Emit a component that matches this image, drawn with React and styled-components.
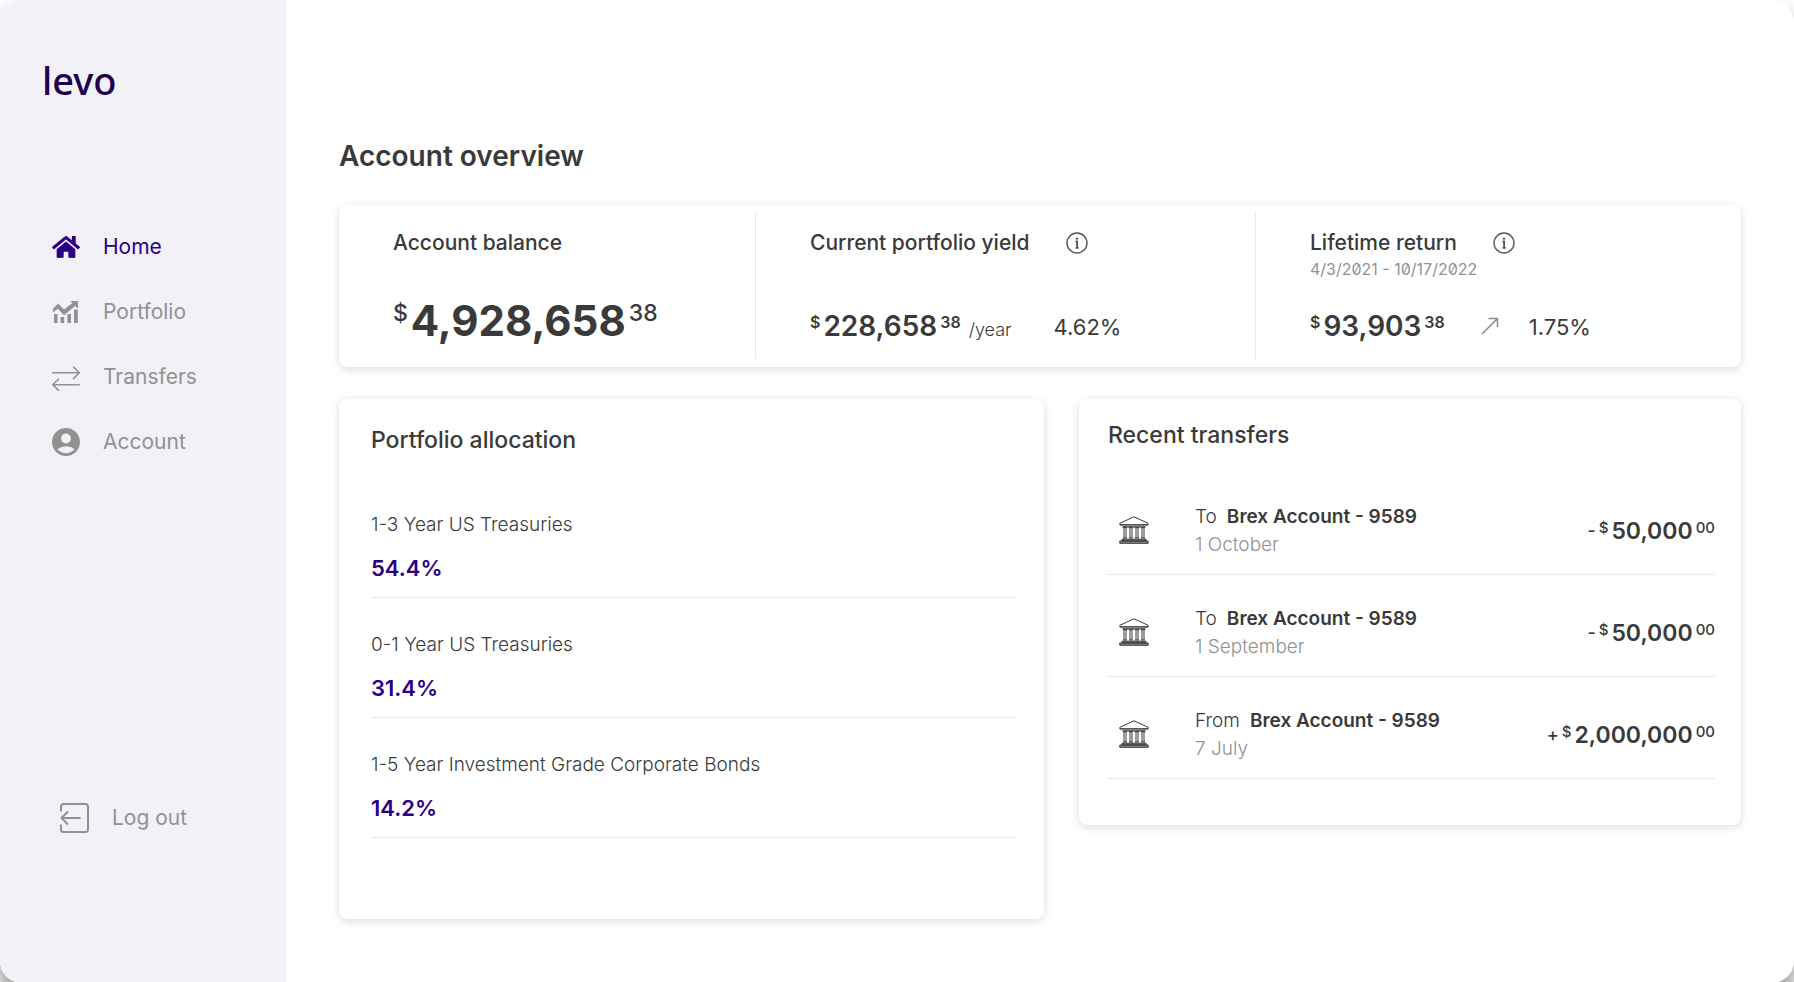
import React from 'react';
import styled, {createGlobalStyle} from 'styled-components';
import {FaHome} from 'react-icons/fa';
import {MdAccountCircle} from 'react-icons/md';

const Color = {
  BRAND: '#2b0087',
  LOGO: '#1e0050',
  TEXT: '#3a3a3a',
  MUTED: '#919191',
  LINE: '#e8e8e8',
  SIDEBAR: '#f2f1f7',
};

const GlobalStyle = createGlobalStyle`
  *, *::before, *::after {
    box-sizing: border-box;
  }

  body {
    margin: 0;
    background: #ffffff;
    color: ${Color.TEXT};
    font-family: Inter, "Liberation Sans", sans-serif;
  }
`;

const Window = styled.div`
  display: flex;
  min-height: 100vh;
  border-radius: 22px;
  overflow: hidden;
  background: #ffffff;
  box-shadow: 0 16px 24px rgba(0, 0, 0, 0.45);
`;

const Sidebar = styled.aside`
  width: 286px;
  flex-shrink: 0;
  display: flex;
  flex-direction: column;
  padding: 56px 24px 141px 42px;
  background: ${Color.SIDEBAR};
`;

const Logo = styled.a`
  color: ${Color.LOGO};
  font-family: "Noto Sans", sans-serif;
  font-size: 38px;
  font-weight: 500;
  line-height: 48px;
  text-decoration: none;
`;

const Nav = styled.nav`
  margin-top: 110px;
`;

const NavList = styled.ul`
  list-style: none;
  margin: 0;
  padding: 0;
`;

const NavLink = styled.a`
  display: flex;
  align-items: center;
  gap: 23px;
  height: 65px;
  padding-left: 10px;
  color: ${({$active}) => $active ? Color.BRAND : Color.MUTED};
  font-size: 21px;
  line-height: 28px;
  text-decoration: none;
`;

const LogoutButton = styled.button`
  display: flex;
  align-items: center;
  gap: 23px;
  margin-top: auto;
  padding: 0 0 0 18px;
  border: 0;
  background: none;
  color: ${Color.MUTED};
  font-family: inherit;
  font-size: 21px;
  line-height: 48px;
  cursor: pointer;
`;

const Main = styled.main`
  flex: 1;
  min-width: 0;
  padding: 138px 53px 64px;
`;

const Title = styled.h1`
  margin: 0 0 31px;
  font-size: 28px;
  font-weight: 600;
  line-height: 36px;
`;

const Card = styled.section`
  border-radius: 8px;
  background: #ffffff;
  box-shadow: 0 2px 10px rgba(0, 0, 0, 0.14);
`;

const Summary = styled(Card)`
  display: grid;
  grid-template-columns: 416fr 500fr 486fr;
  min-height: 162px;
  margin-bottom: 32px;
  padding: 8px 0;
`;

const Stat = styled.div`
  display: flex;
  flex-direction: column;
  justify-content: space-between;
  padding: 16px 16px 16px 54px;

  & + & {
    border-left: 1px solid ${Color.LINE};
  }
`;

const StatHead = styled.div`
  display: flex;
  align-items: center;
  gap: 36px;
`;

const StatLabel = styled.h2`
  margin: 0;
  font-size: 21px;
  font-weight: 500;
  line-height: 28px;
`;

const Period = styled.p`
  margin: 0;
  color: ${Color.MUTED};
  font-size: 16px;
  font-feature-settings: "zero";
  line-height: 24px;
`;

const InfoButton = styled.button`
  display: flex;
  padding: 0;
  border: 0;
  background: none;
  color: #555555;
  cursor: pointer;
`;

const StatRow = styled.div`
  display: flex;
  align-items: flex-end;
`;

const Unit = styled.span`
  margin-left: 8px;
  font-size: 18px;
  font-weight: 300;
  line-height: 26px;
`;

const Rate = styled.span`
  margin-left: ${({$gap}) => $gap}px;
  font-size: 22px;
  line-height: 32px;
`;

const TrendIcon = styled.svg`
  margin: 0 0 8px 36px;
`;

const AmountSize = {
  large: {value: 42, line: 44, small: 23, smallLine: 28, weight: 700, smallWeight: 500},
  medium: {value: 28, line: 34, small: 16, smallLine: 26, weight: 600, smallWeight: 600},
  normal: {value: 23, line: 32, small: 15, smallLine: 26, weight: 600, smallWeight: 500},
};

const AmountBox = styled.div`
  display: flex;
  align-items: flex-start;
  gap: 3px;
  white-space: nowrap;
`;

const AmountValue = styled.span`
  font-size: ${({$size}) => AmountSize[$size].value}px;
  font-weight: ${({$size}) => AmountSize[$size].weight};
  line-height: ${({$size}) => AmountSize[$size].line}px;
`;

const AmountSmall = styled.span`
  font-size: ${({$size}) => AmountSize[$size].small}px;
  font-weight: ${({$size}) => AmountSize[$size].smallWeight};
  line-height: ${({$size}) => AmountSize[$size].smallLine}px;
`;

const Sign = styled.span`
  font-size: 18px;
  font-weight: 500;
  line-height: 32px;
`;

const Panels = styled.div`
  display: grid;
  grid-template-columns: 705fr 662fr;
  gap: 35px;
  align-items: start;
`;

const AllocationCard = styled(Card)`
  padding: 25px 28px 81px 32px;
`;

const TransfersCard = styled(Card)`
  padding: 20px 26px 46px 29px;
`;

const PanelTitle = styled.h2`
  margin: 0 0 22px;
  font-size: 23px;
  font-weight: 500;
  line-height: 32px;
`;

const List = styled.ul`
  list-style: none;
  margin: 0;
  padding: 0;
`;

const Allocation = styled.li`
  padding: 33px 0 13px;
  border-bottom: 1px solid ${Color.LINE};
`;

const AllocationName = styled.div`
  margin-bottom: 13px;
  font-size: 19px;
  font-weight: 350;
  line-height: 28px;
`;

const AllocationShare = styled.div`
  color: ${Color.BRAND};
  font-size: 22px;
  font-weight: 600;
  line-height: 32px;
`;

const Transfer = styled.li`
  display: flex;
  align-items: center;
  padding: 30px 0 15px 11px;
  border-bottom: 1px solid ${Color.LINE};
`;

const TransferInfo = styled.div`
  flex: 1;
  margin-left: 46px;
  font-size: 19px;
  font-weight: 350;
  line-height: 28px;
`;

const Account = styled.b`
  margin-left: 10px;
  font-weight: 600;
`;

const TransferDate = styled.div`
  color: ${Color.MUTED};
`;

const PortfolioIcon = () => (
  <svg width="28" height="28" viewBox="0 0 28 28" fill="currentColor" aria-hidden="true">
    <path d="M1 14.500V11l5-5.500 6 6L20.500 5l-2-1.500V3H26v7h-1l-1.600-2.200L12 17.300l-6.200-6.500z" />
    <rect x="2" y="16" width="3.600" height="9" rx=".6" />
    <rect x="8.600" y="19" width="3.600" height="6" rx=".6" />
    <rect x="15.400" y="16" width="3.600" height="9" rx=".6" />
    <rect x="22" y="11.500" width="3.800" height="13.500" rx=".6" />
  </svg>
);

const TransfersIcon = () => (
  <svg
    width="28" height="28" viewBox="0 0 28 28" fill="none" stroke="currentColor"
    strokeWidth="1.6" strokeLinecap="round" strokeLinejoin="round" aria-hidden="true"
  >
    <path d="M.8 9.800h26.400M21.500 4l5.800 5.800-5.800 5.800" />
    <path d="M27.200 21.800H.8M6.500 16.200L.8 21.800l5.700 5.600" />
  </svg>
);

const LogoutIcon = () => (
  <svg
    width="29" height="30" viewBox="0 0 29 30" fill="none" stroke="currentColor"
    strokeWidth="2" strokeLinejoin="round" aria-hidden="true"
  >
    <path d="M1 8.500v-5A2.500 2.500 0 0 1 3.500 1h22A2.500 2.500 0 0 1 28 3.500v23a2.500 2.500 0 0 1-2.500 2.500h-22A2.500 2.500 0 0 1 1 26.500v-5" />
    <path d="M20.500 15h-19M8 8.500L1.500 15 8 21.500" />
  </svg>
);

const InfoIcon = () => (
  <svg width="22" height="22" viewBox="0 0 22 22" fill="none" stroke="currentColor" strokeWidth="1.4" aria-hidden="true">
    <circle cx="11" cy="11" r="10" />
    <circle cx="11" cy="6.600" r="1.200" fill="currentColor" stroke="none" />
    <path d="M9.500 9.500h1.600V16" strokeWidth="1.800" />
    <path d="M9.300 16h3.600" />
  </svg>
);

const BankIcon = () => (
  <svg width="30" height="31" viewBox="0 0 30 31" fill="none" stroke="#3a3a3a" strokeWidth="1" aria-hidden="true">
    <path d="M15 .8L.8 7.300v1.500h28.400V7.300z" strokeLinejoin="round" />
    <path d="M1 9h28M3.500 10.800h23" strokeWidth="1.200" />
    {[5, 11, 17, 23].map((x) => (
      <g key={x}>
        <path d={`M${x} 11v11M${x + 2} 11v11`} />
        <path d={`M${x - 1} 11.700h4M${x - 1} 22h4`} />
      </g>
    ))}
    <path d="M3 23.200h24v1.700H3zM.8 25h28.400v2.300H.8z" fill="#8a8a8a" />
  </svg>
);

const navItems = [
  {label: 'Home', icon: <FaHome size={28} />, active: true},
  {label: 'Portfolio', icon: <PortfolioIcon />},
  {label: 'Transfers', icon: <TransfersIcon />},
  {label: 'Account', icon: <MdAccountCircle size={28} viewBox="2 2 20 20" />},
];

const allocations = [
  {name: '1-3 Year US Treasuries', share: '54.4%'},
  {name: '0-1 Year US Treasuries', share: '31.4%'},
  {name: '1-5 Year Investment Grade Corporate Bonds', share: '14.2%'},
];

const transfers = [
  {direction: 'To', account: 'Brex Account - 9589', date: '1 October', sign: '-', value: '50,000'},
  {direction: 'To', account: 'Brex Account - 9589', date: '1 September', sign: '-', value: '50,000'},
  {direction: 'From', account: 'Brex Account - 9589', date: '7 July', sign: '+', value: '2,000,000'},
];

const Amount = ({size, sign, value, cents}) => (
  <AmountBox $size={size}>
    {sign && <Sign>{sign}</Sign>}
    <AmountSmall $size={size}>$</AmountSmall>
    <AmountValue $size={size}>{value}</AmountValue>
    <AmountSmall $size={size}>{cents}</AmountSmall>
  </AmountBox>
);

const App = () => (
  <>
    <GlobalStyle />
    <Window>
      <Sidebar>
        <Logo href="#">levo</Logo>
        <Nav>
          <NavList>
            {navItems.map(({label, icon, active}) => (
              <li key={label}>
                <NavLink href="#" $active={active}>{icon}{label}</NavLink>
              </li>
            ))}
          </NavList>
        </Nav>
        <LogoutButton type="button"><LogoutIcon />Log out</LogoutButton>
      </Sidebar>
      <Main>
        <Title>Account overview</Title>
        <Summary>
          <Stat>
            <StatLabel>Account balance</StatLabel>
            <Amount size="large" value="4,928,658" cents="38" />
          </Stat>
          <Stat>
            <StatHead>
              <StatLabel>Current portfolio yield</StatLabel>
              <InfoButton type="button" aria-label="About portfolio yield"><InfoIcon /></InfoButton>
            </StatHead>
            <StatRow>
              <Amount size="medium" value="228,658" cents="38" />
              <Unit>/year</Unit>
              <Rate $gap={42}>4.62%</Rate>
            </StatRow>
          </Stat>
          <Stat>
            <div>
              <StatHead>
                <StatLabel>Lifetime return</StatLabel>
                <InfoButton type="button" aria-label="About lifetime return"><InfoIcon /></InfoButton>
              </StatHead>
              <Period>4/3/2021 - 10/17/2022</Period>
            </div>
            <StatRow>
              <Amount size="medium" value="93,903" cents="38" />
              <TrendIcon width="18" height="18" viewBox="0 0 18 18" fill="none" stroke="#8a8a8a" strokeWidth="1.5" aria-hidden="true">
                <path d="M1 17L16.500 1.500M7.500 1.500h9v8.500" />
              </TrendIcon>
              <Rate $gap={30}>1.75%</Rate>
            </StatRow>
          </Stat>
        </Summary>
        <Panels>
          <AllocationCard>
            <PanelTitle>Portfolio allocation</PanelTitle>
            <List>
              {allocations.map(({name, share}) => (
                <Allocation key={name}>
                  <AllocationName>{name}</AllocationName>
                  <AllocationShare>{share}</AllocationShare>
                </Allocation>
              ))}
            </List>
          </AllocationCard>
          <TransfersCard>
            <PanelTitle>Recent transfers</PanelTitle>
            <List>
              {transfers.map(({direction, account, date, sign, value}) => (
                <Transfer key={date}>
                  <BankIcon />
                  <TransferInfo>
                    <div>{direction}<Account>{account}</Account></div>
                    <TransferDate>{date}</TransferDate>
                  </TransferInfo>
                  <Amount size="normal" sign={sign} value={value} cents="00" />
                </Transfer>
              ))}
            </List>
          </TransfersCard>
        </Panels>
      </Main>
    </Window>
  </>
);

export default App;
